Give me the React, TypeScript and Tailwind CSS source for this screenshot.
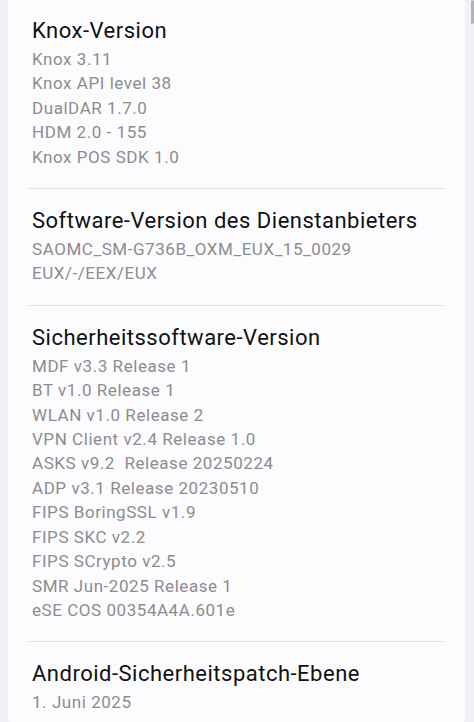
import React from "react";

const sections: { title: string; items: string[] }[] = [
  {
    title: "Knox-Version",
    items: ["Knox 3.11", "Knox API level 38", "DualDAR 1.7.0", "HDM 2.0 - 155", "Knox POS SDK 1.0"],
  },
  {
    title: "Software-Version des Dienstanbieters",
    items: ["SAOMC_SM-G736B_OXM_EUX_15_0029", "EUX/-/EEX/EUX"],
  },
  {
    title: "Sicherheitssoftware-Version",
    items: [
      "MDF v3.3 Release 1",
      "BT v1.0 Release 1",
      "WLAN v1.0 Release 2",
      "VPN Client v2.4 Release 1.0",
      "ASKS v9.2  Release 20250224",
      "ADP v3.1 Release 20230510",
      "FIPS BoringSSL v1.9",
      "FIPS SKC v2.2",
      "FIPS SCrypto v2.5",
      "SMR Jun-2025 Release 1",
      "eSE COS 00354A4A.601e",
    ],
  },
  {
    title: "Android-Sicherheitspatch-Ebene",
    items: ["1. Juni 2025"],
  },
];

export default function App() {
  return (
    <div
      className="relative h-[722px] w-[474px] overflow-hidden bg-[#f2f0f4]"
      style={{ fontFamily: "Roboto, 'Noto Sans', sans-serif" }}
    >
      <div className="absolute right-0 top-0 h-[24px] w-[3px] rounded-full bg-[#b4b2b6]" />
      <div className="ml-[8px] mt-[-1px] w-[457px] rounded-b-[22px] bg-[#fcfcfe] pb-[4px]">
        {sections.map((s, i) => (
          <div key={s.title}>
            {i > 0 && <div className="mx-[20px] h-[1px] bg-[#e4e3e6]" />}
            <div className="pb-[19px] pl-[24px] pt-[16px]">
              <div className="text-[22px] leading-[32px] tracking-[0.5px] text-[#111111]">{s.title}</div>
              {s.items.map((it) => (
                <div
                  key={it}
                  className="whitespace-pre text-[17px] leading-[24.4px] tracking-[0.55px] text-[#8c8c8e]"
                >
                  {it}
                </div>
              ))}
            </div>
          </div>
        ))}
      </div>
    </div>
  );
}
